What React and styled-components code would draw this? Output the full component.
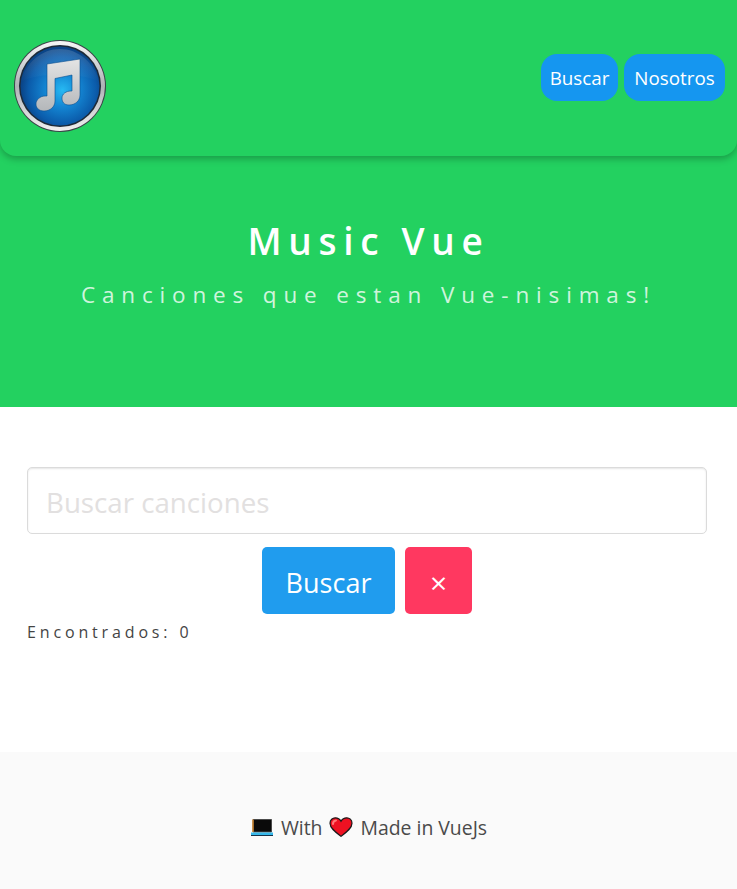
import React from "react";
import styled, { createGlobalStyle } from 'styled-components'

const Global = createGlobalStyle`
    * { box-sizing: border-box; }
    html, body { margin: 0; padding: 0; background: #fff; }
    body { font-family: "Open Sans", "Noto Sans", sans-serif; color: #4a4a4a; }
    input::placeholder { color: #e2e0e0; opacity: 1; }
`

const Hero = styled.section`
    background: #23d160;
    height: 407px;
    display: flex;
    flex-direction: column;
`

const Nav = styled.nav`
    height: 156px;
    padding: 40px 12px 0 14px;
    display: flex;
    justify-content: space-between;
    align-items: flex-start;
    border-radius: 0 0 16px 16px;
    box-shadow: 0 3px 7px rgba(0,0,0,.25);
`

const NavLinks = styled.div`
    display: flex;
    gap: 6px;
    margin-top: 14px;
`

const NavLink = styled.a`
    width: ${p => p.$width}px;
    height: 47px;
    display: flex;
    align-items: center;
    justify-content: center;
    background: #1596f0;
    color: #fff;
    font-size: 18.8px;
    border-radius: 16px;
`

const HeroBody = styled.div`
    display: flex;
    flex-direction: column;
    align-items: center;
    padding-top: 58px;
    color: #fff;
`

const Title = styled.h1`
    margin: 0;
    font-size: 37px;
    line-height: 54px;
    font-weight: 600;
    letter-spacing: 6.7px;
`

const Subtitle = styled.h2`
    margin: 0;
    padding-top: 12px;
    font-size: 22.5px;
    line-height: 30px;
    font-weight: 400;
    letter-spacing: 6.85px;
    color: rgba(255,255,255,.8);
`

const Main = styled.section`
    height: 345px;
    padding: 60px 30px 0 27px;
    display: flex;
    flex-direction: column;
`

const SearchInput = styled.input`
    width: 100%;
    height: 67px;
    padding: 3px 18px 0;
    border: 1px solid #dbdbdb;
    border-radius: 5px;
    box-shadow: inset 0 1px 2px rgba(10,10,10,.1);
    background: #fff;
    font-family: inherit;
    font-size: 27.7px;
    outline: none;
`

const Actions = styled.div`
    display: flex;
    justify-content: center;
    gap: 10px;
    margin-top: 13px;
`

const ActionButton = styled.button`
    height: 67px;
    padding: 3px 0 0;
    width: ${p => p.$wide ? 133 : 67}px;
    border: 0;
    border-radius: 5px;
    background: ${p => p.$bg};
    color: #fff;
    font-family: inherit;
    font-size: ${p => p.$wide ? 27 : 30}px;
    display: flex;
    align-items: center;
    justify-content: center;
`

const Found = styled.p`
    margin: 8px 0 0;
    font-size: 16px;
    line-height: 20px;
    letter-spacing: 3.85px;
    color: #444;
`

const Footer = styled.footer`
    height: 137px;
    background: #fafafa;
    display: flex;
    justify-content: center;
    align-items: center;
    gap: 7px;
    padding-top: 13px;
    font-size: 19.4px;
    color: #4a4a4a;
`

const Logo = () => (
    <svg width="92" height="92" viewBox="0 0 92 92">
        <defs>
            <radialGradient id="disc" cx="53%" cy="55%" r="52%">
                <stop offset="0%" stopColor="#27b9f2"/>
                <stop offset="40%" stopColor="#1487d4"/>
                <stop offset="82%" stopColor="#0b5cab"/>
                <stop offset="100%" stopColor="#0a4588"/>
            </radialGradient>
            <linearGradient id="ring" x1="0" y1="0" x2="0" y2="1">
                <stop offset="0%" stopColor="#f7f7f7"/>
                <stop offset="50%" stopColor="#aeb2b6"/>
                <stop offset="100%" stopColor="#f0f0f0"/>
            </linearGradient>
            <linearGradient id="note" x1="0" y1="0" x2="0" y2="1">
                <stop offset="0%" stopColor="#e4e4e4"/>
                <stop offset="100%" stopColor="#b4b7ba"/>
            </linearGradient>
            <linearGradient id="gloss" x1="0" y1="0" x2="0" y2="1">
                <stop offset="0%" stopColor="#fff" stopOpacity=".16"/>
                <stop offset="100%" stopColor="#fff" stopOpacity="0"/>
            </linearGradient>
        </defs>
        <circle cx="46" cy="46" r="46" fill="#3a4248"/>
        <circle cx="46" cy="46" r="45" fill="url(#ring)"/>
        <circle cx="46" cy="46" r="41" fill="#1d2a38"/>
        <circle cx="46" cy="46" r="39.5" fill="url(#disc)"/>
        <path d="M7 42 C12 22 28 9 46 9 C64 9 80 22 85 42 C70 32 22 32 7 42Z" fill="url(#gloss)"/>
        <path d="M33 24 L66 19 L66 55 C66 61 61 65 55 65 C50 65 48 62 48 58 C48 54 52 51 57 51 L58 51 L58 35 L41 38.5 L41 61 C41 67 36 71 30 71 C25 71 22 68 22 64 C22 60 26 56 31 56 L33 56 Z" fill="url(#note)" stroke="#0b4f8f" strokeWidth=".6"/>
    </svg>
)

const Laptop = () => (
    <svg width="24" height="20" viewBox="0 0 24 20">
        <path d="M3 2.5 L21.5 2.5 L21.5 15 L3 15Z" fill="#0a0a0a" stroke="#4a4a4a" strokeWidth="1"/>
        <path d="M3 2.5 L3 15" stroke="#d98a2b" strokeWidth="1.4"/>
        <path d="M1 15.5 L23 15.5 L23 18.5 L1 18.5Z" fill="#35b8ea"/>
        <path d="M1 18.5 L23 18.5" stroke="#15324a" strokeWidth="1"/>
    </svg>
)

const Heart = () => (
    <svg width="24" height="20" viewBox="0 0 24 20">
        <path d="M12 19.2 C7 15.5 1 11.5 1 6.3 C1 2.8 3.6 .8 6.4 .8 C8.8 .8 10.8 2 12 4.2 C13.2 2 15.2 .8 17.6 .8 C20.4 .8 23 2.8 23 6.3 C23 11.5 17 15.5 12 19.2Z" fill="#ee1122" stroke="#1a1a1a" strokeWidth="1.2"/>
        <path d="M4 7 C4 5 5.2 3.6 7 3.4" stroke="#f77" strokeWidth="2" fill="none" strokeLinecap="round"/>
    </svg>
)

export default function App(){
    return(
        <>
            <Global/>
            <Hero>
                <Nav>
                    <Logo/>
                    <NavLinks>
                        <NavLink $width={77}>Buscar</NavLink>
                        <NavLink $width={101}>Nosotros</NavLink>
                    </NavLinks>
                </Nav>
                <HeroBody>
                    <Title>Music Vue</Title>
                    <Subtitle>Canciones que estan Vue-nisimas!</Subtitle>
                </HeroBody>
            </Hero>
            <Main>
                <SearchInput placeholder="Buscar canciones"/>
                <Actions>
                    <ActionButton $wide $bg="#209cee">Buscar</ActionButton>
                    <ActionButton $bg="#ff3860">×</ActionButton>
                </Actions>
                <Found>Encontrados: 0</Found>
            </Main>
            <Footer>
                <Laptop/>
                <span>With</span>
                <Heart/>
                <span>Made in VueJs</span>
            </Footer>
        </>
    )
}
